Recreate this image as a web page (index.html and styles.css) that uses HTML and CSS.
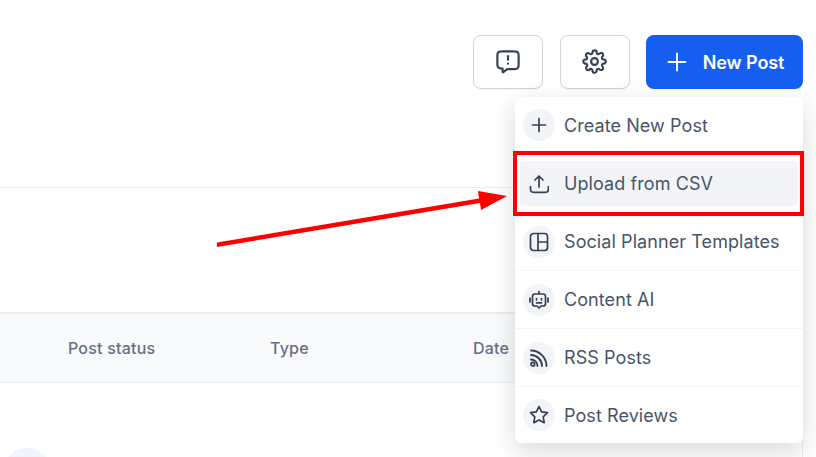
FILE: index.html
```html
<!DOCTYPE html>
<html lang="en">
<head>
  <meta charset="UTF-8" />
  <title>Social Planner</title>
  <link rel="stylesheet" href="styles.css">
</head>
<body>

  <div class="toolbar">
    <button class="icon-btn" aria-label="Feedback">
      <svg width="26" height="26" viewBox="0 0 24 24" fill="none" stroke="#344054" stroke-width="2" stroke-linecap="round" stroke-linejoin="round">
        <path d="M12 6.500v3.500M12 13.500h.01M7 18v2.600c0 .5 0 .7.2.8.2.1.4 0 .8-.3l2.400-1.900c.4-.3.6-.5.9-.6.2-.1.5-.1.9-.1H17c1.700 0 2.500 0 3.200-.3.600-.3 1-.8 1.300-1.300.3-.7.3-1.500.3-3.200V7c0-1.700 0-2.500-.3-3.200-.3-.6-.8-1-1.300-1.300C19.500 2.200 18.700 2.200 17 2.200H7c-1.700 0-2.500 0-3.200.3-.6.3-1 .8-1.300 1.300C2.200 4.500 2.200 5.300 2.200 7v6c0 1.700 0 2.500.3 3.200.3.600.8 1 1.300 1.300.6.300 1.400.5 3.200.5z"/>
      </svg>
    </button>
    <button class="icon-btn" aria-label="Settings">
      <svg width="27" height="27" viewBox="0 0 24 24" fill="none" stroke="#344054" stroke-width="1.900" stroke-linecap="round" stroke-linejoin="round">
        <circle cx="12" cy="12" r="3"/>
        <path d="M18.700 14.700a1.500 1.500 0 0 0 .3 1.650l.05.05a1.820 1.820 0 1 1-2.570 2.570l-.05-.05a1.500 1.500 0 0 0-2.550 1.060v.15a1.820 1.820 0 0 1-3.640 0v-.08a1.500 1.500 0 0 0-2.530-1.060l-.05.05a1.820 1.820 0 1 1-2.570-2.570l.05-.05a1.500 1.500 0 0 0-1.060-2.550h-.15a1.820 1.820 0 0 1 0-3.640h.08a1.500 1.500 0 0 0 1.060-2.530l-.05-.05a1.820 1.820 0 1 1 2.570-2.570l.05.05a1.500 1.500 0 0 0 1.650.3h.07a1.500 1.500 0 0 0 .9-1.370v-.15a1.820 1.820 0 0 1 3.640 0v.08a1.500 1.500 0 0 0 2.530 1.060l.05-.05a1.820 1.820 0 1 1 2.570 2.570l-.05.05a1.500 1.500 0 0 0-.3 1.650v.07a1.500 1.500 0 0 0 1.370.9h.15a1.820 1.820 0 0 1 0 3.640h-.08a1.500 1.500 0 0 0-1.370.9z"/>
      </svg>
    </button>
    <button class="primary-btn">
      <svg width="24" height="24" viewBox="0 0 24 24" fill="none" stroke="#fff" stroke-width="2" stroke-linecap="round"><path d="M12 3.500v17M3.500 12h17"/></svg>
      New Post
    </button>
  </div>

  <div class="panel">
    <div class="panel-top"></div>
    <div class="table-head">
      <span class="col col-status">Post status</span>
      <span class="col col-type">Type</span>
      <span class="col col-date">Date</span>
    </div>
    <div class="table-body">
      <div class="avatar"></div>
    </div>
  </div>

  <div class="menu">
    <div class="menu-item">
      <span class="menu-icon">
        <svg width="20" height="20" viewBox="0 0 20 20" fill="none" stroke="#344054" stroke-width="1.700" stroke-linecap="round"><path d="M10 3.500v13M3.500 10h13"/></svg>
      </span>
      Create New Post
    </div>
    <div class="menu-item active">
      <span class="menu-icon">
        <svg width="20" height="20" viewBox="0 0 20 20" fill="none" stroke="#344054" stroke-width="1.700" stroke-linecap="round" stroke-linejoin="round"><path d="M1.500 12.500v1.700c0 1.500 0 2.200.4 2.800.3.400.7.800 1.100 1 .6.300 1.300.3 2.800.3h9.400c1.500 0 2.200 0 2.800-.3.400-.2.800-.6 1-1 .4-.6.4-1.300.4-2.800v-1.700M14 6l-4-4-4 4M10 2v11"/></svg>
      </span>
      Upload from CSV
    </div>
    <div class="menu-item">
      <span class="menu-icon">
        <svg width="20" height="20" viewBox="0 0 20 20" fill="none" stroke="#344054" stroke-width="1.700" stroke-linejoin="round"><rect x="1.500" y="1.500" width="17" height="17" rx="3"/><path d="M9 1.500v17M9 10h9.500"/></svg>
      </span>
      Social Planner Templates
    </div>
    <div class="menu-item">
      <span class="menu-icon">
        <svg width="20" height="20" viewBox="0 0 20 20" fill="none" stroke="#344054" stroke-width="1.700" stroke-linecap="round" stroke-linejoin="round"><path d="M10 1.500v2.500M6 4h8a2.500 2.500 0 0 1 2.500 2.500v7a2.500 2.500 0 0 1-2.500 2.500h-2l-2 2-2-2H6a2.500 2.500 0 0 1-2.500-2.500v-7A2.500 2.500 0 0 1 6 4zM1 8v4M19 8v4M7.500 8.500v1.500M12.500 8.500v1.500M7.500 12.800h5"/></svg>
      </span>
      Content AI
    </div>
    <div class="menu-item">
      <span class="menu-icon">
        <svg width="20" height="20" viewBox="0 0 20 20" fill="none" stroke="#344054" stroke-width="1.800" stroke-linecap="round"><path d="M2 2.500c8.500 0 15.500 7 15.500 15.500M2 7c6 0 11 5 11 11M2 11.500c3.600 0 6.500 2.900 6.500 6.500"/><circle cx="3.800" cy="16.200" r="1.800"/></svg>
      </span>
      RSS Posts
    </div>
    <div class="menu-item">
      <span class="menu-icon">
        <svg width="20" height="20" viewBox="0 0 20 20" fill="none" stroke="#344054" stroke-width="1.700" stroke-linejoin="round"><path d="M10 1.500l2.600 5.400 5.900.8-4.300 4.100 1 5.900L10 14.900l-5.200 2.800 1-5.900L1.500 7.700l5.900-.8z"/></svg>
      </span>
      Post Reviews
    </div>
  </div>

  <div class="callout"></div>
  <svg class="arrow" width="300" height="60" viewBox="0 0 300 60">
    <path d="M1 52.500L263 8.500 262 1 291 6 265 20 264 13 1 57z" fill="#f00"/>
  </svg>

</body>
</html>
```

FILE: styles.css
```css
body {
  font-family: 'Inter', sans-serif;
  background: white;
  margin: 0;
  padding: 0;
  height: 457px;
  overflow: hidden;
  position: relative;
}
.toolbar {
  display: flex;
  justify-content: flex-end;
  gap: 17px;
  padding: 35px 13px 0 0;
}
.icon-btn {
  width: 70px;
  height: 54px;
  display: flex;
  align-items: center;
  justify-content: center;
  padding: 0 1px 1px 0;
  background: white;
  border: 1px solid #d0d5dd;
  border-radius: 8px;
  box-shadow: 0 1px 2px rgba(16, 24, 40, 0.05);
}
.primary-btn {
  width: 157px;
  height: 54px;
  display: flex;
  align-items: center;
  justify-content: center;
  gap: 14px;
  padding: 0;
  background: #155eef;
  color: white;
  border: none;
  border-radius: 8px;
  font-family: 'Inter', sans-serif;
  font-size: 18px;
  font-weight: 600;
  letter-spacing: -0.1px;
  margin-left: -1px;
}
.panel {
  margin: 98px 13px 0 0;
  height: 270px;
  overflow: hidden;
  border-right: 1px solid #eaecf0;
}
.panel-top {
  height: 124px;
  border-top: 1px solid #eaecf0;
}
.table-head {
  display: flex;
  align-items: center;
  height: 68px;
  background: #f9fafb;
  border-top: 2px solid #eaecf0;
  border-bottom: 1px solid #eaecf0;
  color: #667085;
  font-size: 16px;
  font-weight: 500;
  letter-spacing: 0.2px;
}
.col-status {
  margin-left: 68px;
  width: 202px;
}
.col-type {
  width: 203px;
}
.table-body {
  padding: 65px 0 0 3px;
}
.avatar {
  width: 48px;
  height: 48px;
  border-radius: 50%;
  background: #eff4ff;
}
.menu {
  position: absolute;
  top: 97px;
  left: 515px;
  width: 288px;
  background: white;
  border-radius: 6px;
  box-shadow: 0 8px 24px rgba(16, 24, 40, 0.16);
}
.menu-item {
  box-sizing: border-box;
  height: 58px;
  display: flex;
  align-items: center;
  gap: 9px;
  padding: 0 8px;
  border-bottom: 1px solid #f2f4f7;
  color: #475467;
  font-size: 18px;
  letter-spacing: 0.08px;
}
.menu-item:first-child {
  height: 57px;
}
.menu-item:last-child {
  height: 56px;
  border-bottom: none;
}
.menu-item.active {
  height: 45px;
  margin: 7px 5px 7px;
  padding: 0 3px;
  border-bottom: none;
  border-radius: 4px;
  background: #f2f4f7;
}
.menu-icon {
  width: 32px;
  height: 32px;
  flex: none;
  display: flex;
  align-items: center;
  justify-content: center;
  border-radius: 50%;
  background: #f2f4f7;
}
.callout {
  position: absolute;
  top: 151px;
  left: 513px;
  width: 283px;
  height: 57px;
  border: 4px solid #f00;
}
.arrow {
  position: absolute;
  top: 190px;
  left: 216px;
}
```
